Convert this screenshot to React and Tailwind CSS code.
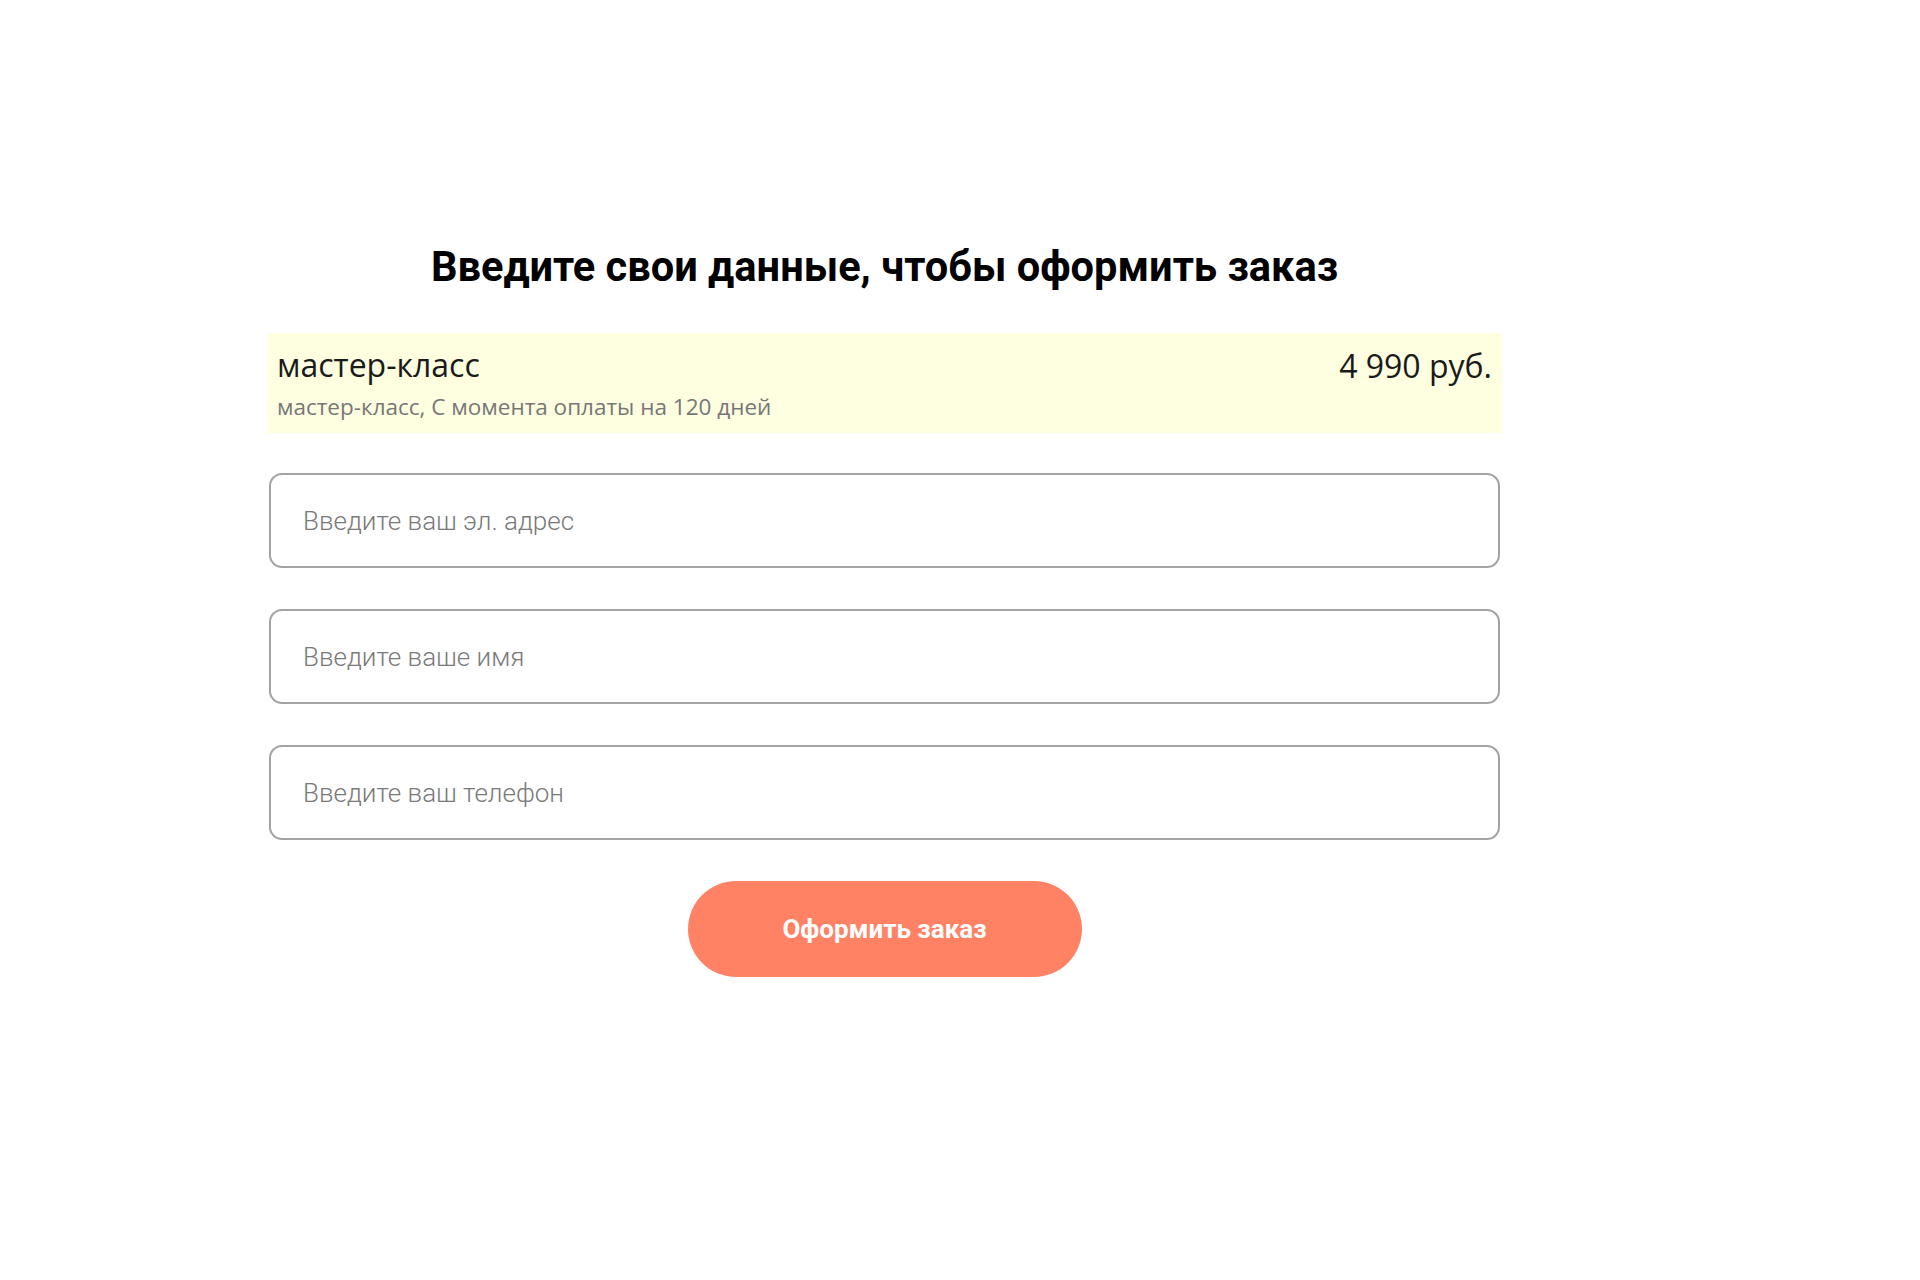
const fields = [
  { name: 'email', type: 'email', placeholder: 'Введите ваш эл. адрес' },
  { name: 'name', type: 'text', placeholder: 'Введите ваше имя' },
  { name: 'phone', type: 'tel', placeholder: 'Введите ваш телефон' },
]

export default function App() {
  return (
    <div className="min-h-screen bg-white">
      <div className="ml-[267px] w-[1235px] pt-[241px]">
        <h1 className="text-center text-[41.6px] font-bold leading-[52px] text-black" style={{ fontFamily: 'Roboto, sans-serif' }}>
          Введите свои данные, чтобы оформить заказ
        </h1>

        <div className="mt-[40px] flex h-[100px] items-start justify-between bg-[#fefee0] px-[10px] pt-[10px]" style={{ fontFamily: '"Open Sans", sans-serif' }}>
          <div>
            <div className="text-[32px] leading-[44px] text-[#1a1a1a]">мастер-класс</div>
            <div className="mt-[5px] text-[22.5px] leading-[30px] text-[#777]">мастер-класс, С момента оплаты на 120 дней</div>
          </div>
          <div className="pt-[1px] text-[32px] leading-[44px] text-[#1a1a1a]">4 990 руб.</div>
        </div>

        <form className="mt-[40px] flex flex-col gap-[41px]" style={{ fontFamily: 'Roboto, sans-serif' }}>
          {fields.map(f => (
            <input
              key={f.name}
              type={f.type}
              name={f.name}
              placeholder={f.placeholder}
              className="mx-[2px] h-[95px] rounded-[13px] border-2 border-[#a3a3a3] bg-white px-[32px] text-[26px] font-light text-[#333] outline-none placeholder:text-[#7a7a7a]"
            />
          ))}
          <button type="button" className="mx-auto h-[96px] w-[394px] rounded-full bg-[#ff8264] text-[26px] font-bold text-white">
            Оформить заказ
          </button>
        </form>
      </div>
    </div>
  )
}
